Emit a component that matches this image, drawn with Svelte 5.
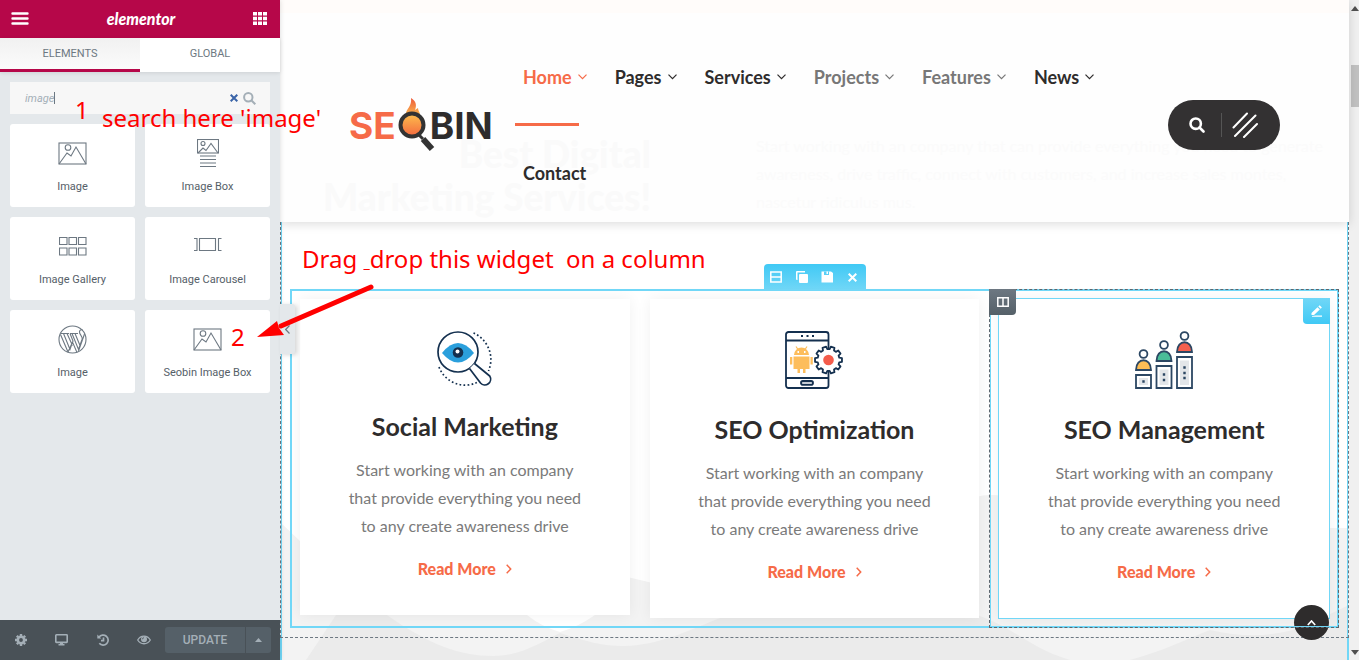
<script>
  const widgets = [
    { label: 'Image', icon: 'image' },
    { label: 'Image Box', icon: 'box' },
    { label: 'Image Gallery', icon: 'gallery' },
    { label: 'Image Carousel', icon: 'carousel' },
    { label: 'Image', icon: 'wordpress' },
    { label: 'Seobin Image Box', icon: 'image' }
  ];
  const links = [
    { label: 'Home', state: 'active', menu: true },
    { label: 'Pages', state: '', menu: true },
    { label: 'Services', state: '', menu: true },
    { label: 'Projects', state: 'muted', menu: true },
    { label: 'Features', state: 'muted', menu: true },
    { label: 'News', state: '', menu: true },
    { label: 'Contact', state: '', menu: false }
  ];
  const cards = [
    { title: 'Social Marketing', icon: 'eye' },
    { title: 'SEO Optimization', icon: 'phone' },
    { title: 'SEO Management', icon: 'people' }
  ];
  let query = $state('image');

  const gear = Array.from({ length: 10 }, (_, i) => {
    const at = (r, d) => {
      const a = ((i * 36 + d) * Math.PI) / 180;
      return `${(43.5 + r * Math.cos(a)).toFixed(2)} ${(29 + r * Math.sin(a)).toFixed(2)}`;
    };
    return `${i ? 'L' : 'M'}${at(11, -12)}L${at(13.6, -8)}L${at(13.6, 8)}L${at(11, 12)}`;
  }).join('') + 'Z';
</script>

{#snippet picture()}
  <rect x="1" y="1" width="27" height="21" />
  <circle cx="10" cy="5.5" r="2.8" />
  <path d="M1 22 9 11l4 3 5-9 10 17" />
{/snippet}

<div class="app">
  <aside>
    <div class="brand">
      <button aria-label="Menu">
        <svg width="18" height="13" viewBox="0 0 18 13" stroke="#fff" stroke-width="2.4" stroke-linecap="round"><path d="M1.5 1.5h15M1.5 6.5h15M1.5 11.5h15" /></svg>
      </button>
      <span class="script">elementor</span>
      <button aria-label="Widgets">
        <svg width="14" height="13" viewBox="0 0 14 13" fill="#fff"><path d="M0 0h4v3.5H0zM5 0h4v3.5H5zM10 0h4v3.5h-4zM0 4.7h4v3.5H0zM5 4.7h4v3.5H5zM10 4.7h4v3.5h-4zM0 9.4h4v3.5H0zM5 9.4h4v3.5H5zM10 9.4h4v3.5h-4z" /></svg>
      </button>
    </div>
    <div class="tabs">
      <button class="on">ELEMENTS</button>
      <button>GLOBAL</button>
    </div>
    <div class="search">
      <label><input aria-label="Search widget" bind:value={query} /><span class="caret"></span></label>
      <svg width="8" height="8" viewBox="0 0 8 8" stroke="#3a64a8" stroke-width="2"><path d="m.7.7 6.6 6.6M7.300.7.700 7.300" /></svg>
      <svg width="13" height="13" viewBox="0 0 13 13" fill="none" stroke="#a4afb7" stroke-width="2"><circle cx="5.300" cy="5.300" r="4.200" /><path d="m8.300 8.300 4 4" /></svg>
    </div>
    <div class="widgets">
      {#each widgets as w}
        <button class="widget">
          <span class="glyph">
            {#if w.icon === 'image'}
              <svg width="29" height="23" viewBox="0 0 29 23">{@render picture()}</svg>
            {:else if w.icon === 'box'}
              <svg width="22" height="28" viewBox="0 0 22 28"><rect x=".5" y=".5" width="21" height="13.500" /><circle cx="6" cy="4.500" r="2" /><path d="m1 14 5-5 3 2.500 5-7 7 9.500M3 17h16M3 20.500h16M3 24h16M3 27.500h16" /></svg>
            {:else if w.icon === 'gallery'}
              <svg width="28" height="19" viewBox="0 0 28 19"><path d="M.5.5h7.500v7H.500zM10 .5h7.500v7H10zM19.500.5h7.500v7h-7.500zM.5 11h7.500v7H.500zM10 11h7.500v7H10zM19.500 11h7.500v7h-7.500z" /></svg>
            {:else if w.icon === 'carousel'}
              <svg width="28" height="16" viewBox="0 0 28 16"><path d="M5.500.5h16v12h-16zM0 .5h3v12H0M27.500.5h-3v12h3" /></svg>
            {:else}
              <svg width="29" height="29" viewBox="0 0 29 29"><circle cx="14.500" cy="14.500" r="13.500" /><path d="M2.500 9.500 10 27M5.500 8.500 12 24.500l3-8.500-3-7.500M14 8.500l6.500 16 3.500-10M3 8.500h8M12 8.500h8M17 8.500l5 12M9 8.500l5.500 12M24 14.500c1-4-3-4.500-2.500-8 .5-2 2.500-2 3-1.500M10 27l4.500-10 4.500 10.500M20.500 26 26.500 9" /></svg>
            {/if}
          </span>
          <span>{w.label}</span>
        </button>
      {/each}
    </div>
    <footer>
      <button aria-label="Settings"><svg width="12" height="12" viewBox="0 0 12 12"><circle cx="6" cy="6" r="3.200" fill="none" stroke="#a4afb7" stroke-width="2.600" /><path d="M6 0v2M6 10v2M0 6h2M10 6h2M1.800 1.800l1.400 1.400M8.800 8.800l1.400 1.400M1.800 10.200l1.400-1.400M8.800 3.200l1.400-1.400" stroke="#a4afb7" stroke-width="2.400" /></svg></button>
      <button aria-label="Responsive mode"><svg width="13" height="12" viewBox="0 0 13 12"><rect x=".8" y=".8" width="11.400" height="7.600" rx=".6" fill="none" stroke="#a4afb7" stroke-width="1.600" /><path d="M5 8h3v2h1.500v1.500h-6V10H5z" fill="#a4afb7" /></svg></button>
      <button aria-label="History"><svg width="12" height="12" viewBox="0 0 12 12" fill="none" stroke="#a4afb7" stroke-width="1.700"><path d="M2 3.300a5 5 0 1 1 .3 6M6.500 3.500v3.200H4" /><path d="M.3.500v4h4z" fill="#a4afb7" stroke="none" /></svg></button>
      <button aria-label="Preview"><svg width="14" height="10" viewBox="0 0 14 10"><path d="M.7 5C3.500-.2 10.500-.2 13.300 5c-2.800 5-9.800 5-12.600 0z" fill="none" stroke="#a4afb7" stroke-width="1.300" /><circle cx="7" cy="4.300" r="3" fill="#a4afb7" /><path d="M5.400 4.300A1.600 1.600 0 0 1 7 2.700" fill="none" stroke="#495157" stroke-width=".8" /></svg></button>
      <div class="save">
        <button class="update">UPDATE</button>
        <button class="more" aria-label="Save options"><svg width="7" height="4" viewBox="0 0 7 4" fill="#a4afb7"><path d="M0 4 3.500 0 7 4z" /></svg></button>
      </div>
    </footer>
    <button class="collapse" aria-label="Hide panel"><svg width="5" height="9" viewBox="0 0 5 9" fill="none" stroke="#6d7882" stroke-width="1.200"><path d="M4.500.5.700 4.500l3.800 4" /></svg></button>
  </aside>

  <main>
    <svg class="hills" viewBox="0 480 1069 180" preserveAspectRatio="none">
      <path fill="#f3f3f3" d="M0 522 20 541C70 585 150 560 220 560S420 590 465 615L560 633 610 615Q635 602 660 592C720 560 650 495 712 495 Q730 495 760 502L1040 528H1069V660H0Z" />
      <path fill="#fff" d="M247 615Q262 627 280 632 298 627 315 615Z" />
      <path fill="#ebebeb" d="M26 660 56 615C70 590 90 595 107 615 150 645 180 656 213 656 240 656 260 643 280 633 310 642 320 646 345 646 380 645 410 630 440 618L500 600H660L705 618C740 632 750 648 790 660Z" />
      <path fill="#ebebeb" d="M850 660C880 652 905 640 930 630 965 638 995 637 1025 626L1069 605V660Z" />
    </svg>

    <header>
      <div class="ghost" aria-hidden="true">
        <h2>Best Digital<br />Marketing Services!</h2>
        <p>Start working with an company that can provide everything you need to generate<br />awareness, drive traffic, connect with customers, and increase sales montes,<br />nascetur ridiculus mus.</p>
      </div>
      <a class="logo" href="#home" aria-label="Seobin">
        <span class="se">SE</span>
        <svg width="40" height="54" viewBox="0 0 40 54">
          <defs><linearGradient id="fire" x1="0" y1="0" x2="0" y2="1"><stop offset="0" stop-color="#fdc04d" /><stop offset="1" stop-color="#f4683f" /></linearGradient>
          <linearGradient id="flame" x1="0" y1="0" x2="0" y2="1"><stop offset="0" stop-color="#ee5a3b" /><stop offset="1" stop-color="#f9b04c" /></linearGradient></defs>
          <path fill="url(#flame)" d="M9 15C10 10 15 8 14 0c5 3 6 7 4 12l3-2c0 2 1 3 2 6z" />
          <circle cx="15" cy="27" r="11.500" fill="url(#fire)" stroke="#333" stroke-width="4" />
          <path d="m22 37 4 4" stroke="#333" stroke-width="3" /><path d="m26 41 9 10" stroke="#333" stroke-width="6" />
        </svg>
        <span class="bin">BIN</span>
      </a>
      <nav>
        {#each links as l}
          <a href="#{l.label.toLowerCase()}" class={l.state}>{l.label}{#if l.menu}<svg width="9" height="6" viewBox="0 0 9 6" fill="none" stroke="currentColor" stroke-width="1.200"><path d="m.5.700 4 4 4-4" /></svg>{/if}</a>
        {/each}
      </nav>
      <div class="pill">
        <button aria-label="Search"><svg width="16" height="16" viewBox="0 0 16 16" fill="none" stroke="#fff" stroke-width="2.600"><circle cx="6.700" cy="6.700" r="5.200" /><path d="m10.500 10.500 4 4" stroke-linecap="round" /></svg></button>
        <button aria-label="Open side menu"><svg width="26" height="26" viewBox="0 0 26 26" stroke="#fff" stroke-width="2" stroke-linecap="round"><path d="M1.500 15.500 15 1.500M3 24 23.500 3.500M12 25 25 12" /></svg></button>
      </div>
    </header>

    <section class="services">
      <div class="row">
        <div class="tools">
          <button aria-label="Edit layout"><svg width="12" height="12" viewBox="0 0 12 12" fill="none" stroke="#fff" stroke-width="1.500"><path d="M.8 1h10.400v10H.800zM1 6h10" /></svg></button>
          <button aria-label="Duplicate"><svg width="12" height="12" viewBox="0 0 12 12" fill="#fff"><path d="M0 1a1 1 0 0 1 1-1h8v1.500H1.500V9H1a1 1 0 0 1-1-1z" /><rect x="3" y="3" width="9" height="9" rx="1" /></svg></button>
          <button aria-label="Save"><svg width="12" height="12" viewBox="0 0 12 12"><path fill="#fff" d="M.5.5H10L12 2v9.500H.500z" /><path fill="#5acff6" d="M3 .5h5V4H3z" /><path fill="#fff" d="M5.500.5h1.500V3H5.500z" /></svg></button>
          <button aria-label="Delete"><svg width="9" height="9" viewBox="0 0 9 9" stroke="#fff" stroke-width="2"><path d="m.7.7 7.600 7.600M8.300.7.700 8.300" /></svg></button>
        </div>
        {#each cards as c, i}
          <div class="col" class:selected={i === 2}>
            <article>
              {#if c.icon === 'eye'}
                <svg width="56" height="55" viewBox="0 0 56 55" fill="none" stroke="#14304f" stroke-width="1.700">
                  <path stroke-dasharray="1.700 2.300" d="M36.500 2A29 29 0 0 1 51.500 40M2 36A28 28 0 0 0 40 51.500" />
                  <circle cx="21" cy="21" r="20" fill="#fff" />
                  <path d="M5 22Q21 2 37 22 21 41 5 22z" fill="#2a9fdc" stroke="none" />
                  <circle cx="21" cy="21.500" r="5.300" fill="#14304f" stroke="none" /><circle cx="20.500" cy="20.500" r="2" fill="#fff" stroke="none" />
                  <path fill="#fff" stroke-linejoin="round" d="M32.500 37.500 43.500 52a5.800 5.800 0 0 0 9.200-7L37.500 32.500" />
                </svg>
              {:else if c.icon === 'phone'}
                <svg width="59" height="58" viewBox="0 0 59 58" fill="none" stroke="#14304f" stroke-width="1.800">
                  <rect x="1" y="1" width="42.500" height="56" rx="2.500" fill="#fff" /><path d="M1 9.500h42.500M1 47h42.500" />
                  <path stroke-width="2" stroke-dasharray="2 3.500" d="M16 5h14" /><rect x="16" y="50" width="12" height="3.800" rx="1.900" fill="#c5ccd5" />
                  <g fill="#fdbd5b" stroke="none"><path d="M9 24a7.500 7.500 0 0 1 15 0zM8.500 25.500h16V38h-4v4h-2.500v-4h-3v4h-2.500v-4h-4zM5 26h2.300v7.500H5zM25.500 26h2.300v7.500h-2.300z" /></g>
                  <path stroke="#fdbd5b" stroke-width="1.200" d="m11 15.500 2 3M22 15.500l-2 3" /><path stroke="#fff" d="M12.500 21h1.500M19 21h1.500" />
                  <path d={gear} fill="#fff" stroke-linejoin="round" /><circle cx="43.500" cy="29" r="5.300" fill="#f45c4b" stroke="none" />
                </svg>
              {:else}
                <svg width="58" height="58" viewBox="0 0 58 58" fill="none" stroke="#2c4763" stroke-width="1.800">
                  <circle cx="8.500" cy="23" r="3.900" /><path fill="#fdbd55" d="M1 39c0-13 15-13 15 0z" /><path d="M1 44h15v13H1z" /><path fill="#e3e6e9" stroke="none" d="M4 47h9v7H4z" />
                  <circle cx="29" cy="14" r="3.900" /><path fill="#4abd98" d="M21.500 30c0-13 15-13 15 0z" /><path d="M21.500 35h15v22h-15z" /><path fill="#e3e6e9" stroke="none" d="M24.500 38.500h9V54h-9z" />
                  <circle cx="49.500" cy="5" r="3.900" /><path fill="#f5604e" d="M42 21c0-13 15-13 15 0z" /><path d="M42 26h15v31H42z" /><path fill="#e3e6e9" stroke="none" d="M45 29.500h9V54h-9z" />
                  <path stroke-width="2.400" d="M7.300 50.500h2.400M27.800 43.500h2.400M27.800 49h2.400M48.300 36.500h2.400M48.300 42h2.400M48.300 47h2.400" />
                </svg>
              {/if}
              <h3>{c.title}</h3>
              <p>Start working with an company<br />that provide everything you need<br />to any create awareness drive</p>
              <a href="#read">Read More<svg width="6" height="10" viewBox="0 0 6 10" fill="none" stroke="currentColor" stroke-width="1.500"><path d="m.7.800 4 4.200-4 4.200" /></svg></a>
            </article>
            {#if i === 2}
              <button class="handle" aria-label="Edit column"><svg width="12" height="10" viewBox="0 0 12 10" fill="none" stroke="#fff" stroke-width="1.500"><path d="M.8.800h10.400v8.400H.800zM6 1v8" /></svg></button>
              <button class="pencil" aria-label="Edit widget"><svg width="12" height="12" viewBox="0 0 12 12" fill="#fff"><path d="M.5 8 6.500 2.200l2.300 2.300L3 10H.500zM7.300 1.500 8.700.3l2.200 2.200-1.300 1.300zM5 10.500h6v1.300H1V11z" /></svg></button>
            {/if}
          </div>
        {/each}
      </div>
    </section>
    <div class="next"></div>
    <a class="top" href="#top" aria-label="Back to top"><svg width="9" height="6" viewBox="0 0 9 6" fill="none" stroke="#fff" stroke-width="1.700"><path d="m.8 5 3.700-4 3.700 4" /></svg></a>
  </main>

  <div class="scroll">
    <svg width="8" height="5" viewBox="0 0 8 5" fill="#505050"><path d="M0 5 4 0l4 5z" /></svg>
    <div class="thumb"></div>
    <svg width="8" height="5" viewBox="0 0 8 5" fill="#505050"><path d="M0 0h8L4 5z" /></svg>
  </div>

  <div class="note one">1</div>
  <div class="note find">search here 'image'</div>
  <div class="note drag">Drag <u>&nbsp;</u>drop this widget&nbsp; on a column</div>
  <div class="note two">2</div>
  <svg class="arrow" width="118" height="56" viewBox="0 0 118 56"><path d="M114 3 24 42" stroke="#f00" stroke-width="5" stroke-linecap="round" /><path fill="#f00" d="m0 53 20-16 2 7 5 7z" /></svg>
</div>

<style>
  :global(body) { margin: 0; }
  .app { position: relative; display: flex; height: 100vh; overflow: hidden; font-family: Lato, sans-serif; background: #fff; }
  .app * { box-sizing: border-box; }
  button { border: 0; padding: 0; background: none; font: inherit; color: inherit; display: flex; align-items: center; justify-content: center; }
  a { color: inherit; text-decoration: none; }
  svg { display: block; flex: none; }

  aside { position: relative; z-index: 5; width: 280px; flex: none; display: flex; flex-direction: column; background: #e4e8eb; font-family: Roboto, sans-serif; box-shadow: 0 0 5px rgba(0, 0, 0, .15); }
  .brand { height: 38px; padding: 0 13px 2px 11px; display: flex; align-items: center; justify-content: space-between; background: #b60749; color: #fff; }
  .script { font: italic 900 16px Lato, sans-serif; }
  .tabs { display: flex; height: 34px; background: #fff; color: #6d7882; font-size: 11px; box-shadow: 0 1px 4px rgba(0, 0, 0, .1); }
  .tabs button { flex: 1; border-bottom: 3px solid transparent; }
  .tabs .on { background: linear-gradient(#f1f1f1, #fbfbfb); border-color: #b60749; }
  .search { display: flex; align-items: center; gap: 5px; height: 32px; margin: 10px; padding: 0 14px 0 15px; background: #f7f7f7; }
  .search label { flex: 1; min-width: 0; display: flex; align-items: center; }
  .search input { field-sizing: content; min-width: 0; border: 0; outline: 0; padding: 0; background: none; font: italic 11px Roboto, sans-serif; color: #a4afb7; }
  .caret { width: 1px; height: 12px; background: #6d7882; }
  .widgets { display: grid; grid-template-columns: 1fr 1fr; gap: 10px; padding: 0 10px; }
  .widget { height: 83px; flex-direction: column; justify-content: flex-start; background: #fff; border-radius: 3px; font-size: 11px; color: #556068; }
  .glyph { height: 58px; display: flex; align-items: center; }
  .glyph svg { fill: none; stroke: #6d7882; stroke-width: 1.1; }
  .widget span + span { line-height: 10px; }
  footer { margin-top: auto; height: 40px; display: flex; align-items: center; background: #495157; color: #a4afb7; }
  footer > button { width: 41px; height: 40px; }
  .save { display: flex; gap: 1px; margin-left: 1px; }
  .save button { height: 26px; background: #556068; }
  .update { width: 80px; font: 500 12px Roboto, sans-serif; border-radius: 3px 0 0 3px; }
  .more { width: 25px; border-radius: 0 3px 3px 0; }
  .collapse { position: absolute; left: 280px; top: 304px; width: 15px; height: 50px; background: #e4e8eb; box-shadow: 2px 1px 4px rgba(0, 0, 0, .15); border-radius: 0 3px 3px 0; }

  main { position: relative; flex: 1; min-width: 0; display: flex; flex-direction: column; }
  .hills { position: absolute; left: 0; bottom: 0; width: 100%; height: 180px; }
  header { position: relative; z-index: 3; display: flex; align-items: center; padding: 29px 69px 1px; background: linear-gradient(#fffcfa 13px, #fefefe 13px); box-shadow: 0 2px 10px rgba(0, 0, 0, .14); color: #2e2c2c; }
  .ghost { position: absolute; inset: 0; display: flex; padding-top: 132px; gap: 105px; pointer-events: none; }
  .ghost h2 { width: 371px; margin: 0; text-align: right; white-space: nowrap; font-size: 37px; line-height: 43px; font-weight: 900; color: #fafafa; }
  .ghost p { margin: 0; white-space: nowrap; font-size: 16px; line-height: 28px; color: #fbfbfb; }
  .logo, nav, .pill { position: relative; }
  .logo { display: flex; align-items: center; width: 149px; font: 700 37px Inter, sans-serif; }
  .se { color: #f66b48; }
  .logo svg { margin: 0 -7px 0 1px; }
  nav { flex: 1; display: flex; flex-wrap: wrap; margin: 0 44px 0 25px; column-gap: 28px; font-size: 18px; font-weight: 700; }
  nav a { position: relative; display: flex; align-items: center; gap: 6px; height: 96px; }
  nav .active { color: #f66b48; }
  nav .active::after { content: ''; position: absolute; left: -8px; right: 8px; bottom: -1px; height: 3px; background: #f66b48; }
  nav .muted { color: #777; }
  .pill { display: flex; width: 112px; height: 50px; border-radius: 25px; background: #333132; }
  .pill button { flex: 1; position: relative; padding-left: 1px; }
  .pill button + button { padding: 0 14px 0 0; }
  .pill button:first-child { flex: 0 0 56px; }
  .pill button + button::before { content: ''; position: absolute; left: -3px; top: 13px; bottom: 13px; width: 1px; background: #555; }

  .services { position: relative; padding: 67px 9px 9px; border: 1px dashed #6d7882; border-top: 0; }
  .services::before { content: ''; position: absolute; inset: 0; border: solid #71d7f7; border-width: 0 1px; pointer-events: none; }
  .row { position: relative; display: flex; align-items: flex-start; }
  .row::after { content: ''; position: absolute; inset: 0; border: 2px solid #71d7f7; pointer-events: none; }
  .tools { position: absolute; left: 50%; top: -25px; width: 102px; height: 26px; margin-left: -51px; display: flex; background: linear-gradient(#40c9f5, #71d7f7); border-radius: 4px 4px 0 0; }
  .tools button { flex: 1; }
  .col { position: relative; flex: 1; min-width: 0; padding: 10px; }
  article { padding: 32px 10px; display: flex; flex-direction: column; align-items: center; text-align: center; background: #fff; box-shadow: 0 0 14px rgba(0, 0, 0, .06); color: #7a7a7a; }
  h3 { margin: 24px 0 14px; font-size: 25px; line-height: 32px; font-weight: 700; color: #2e2c2c; }
  article p { margin: 0 0 15px; font-size: 16px; line-height: 28px; }
  article a { display: flex; align-items: center; gap: 10px; font-size: 16px; line-height: 28px; font-weight: 900; color: #f66b48; }
  .selected::before { content: ''; position: absolute; inset: 0; z-index: 2; border: 1px dashed #5d666e; box-shadow: inset 0 0 0 1px #71d7f7; pointer-events: none; }
  .selected article { outline: 1px solid #71d7f7; }
  .handle, .pencil { position: absolute; z-index: 3; width: 27px; height: 26px; }
  .handle { left: 0; top: 0; background: linear-gradient(#6d7882, #556068); border-radius: 0 0 4px 0; }
  .pencil { right: 9px; top: 9px; background: linear-gradient(#71d7f7, #40c9f5); border-radius: 0 0 0 4px; }
  .next { flex: 1; position: relative; border: solid #71d7f7; border-width: 0 2px; }
  .top { position: absolute; right: 20px; bottom: 20px; width: 35px; height: 35px; border-radius: 50%; background: #2e2c2c; display: grid; place-items: center; }

  .scroll { width: 10px; flex: none; display: flex; flex-direction: column; padding: 6px 0 5px 2px; background: #f0f0f0; }
  .thumb { height: 42px; margin: 54px 0 auto; background: #c1c1c1; }

  .note { position: absolute; z-index: 6; color: #f00; font: 24px/32px "Noto Sans", sans-serif; white-space: nowrap; }
  .note u { text-decoration-thickness: 1px; }
  .one { left: 75px; top: 94px; }
  .find { left: 102px; top: 102px; }
  .drag { left: 302px; top: 243px; }
  .two { left: 231px; top: 321px; }
  .arrow { position: absolute; z-index: 6; left: 257px; top: 284px; }
</style>
